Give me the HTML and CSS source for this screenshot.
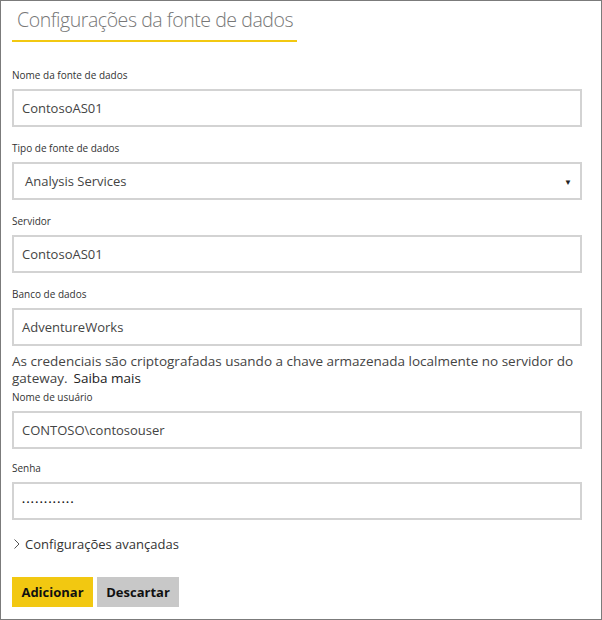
FILE: index.html
```html
<!DOCTYPE html>
<html lang="pt">
<head>
<meta charset="utf-8">
<link rel="stylesheet" href="styles.css">
</head>
<body>
<div class="panel">
  <div class="title-wrap"><h1 class="title">Configurações da fonte de dados</h1></div>
  <div class="form">
    <div class="group">
      <div class="label">Nome da fonte de dados</div>
      <div class="field">ContosoAS01</div>
    </div>
    <div class="group">
      <div class="label">Tipo de fonte de dados</div>
      <div class="field select"><span class="select-value">Analysis Services</span><span class="arrow">▼</span></div>
    </div>
    <div class="group">
      <div class="label">Servidor</div>
      <div class="field">ContosoAS01</div>
    </div>
    <div class="group">
      <div class="label">Banco de dados</div>
      <div class="field">AdventureWorks</div>
    </div>
    <div class="note">
      <span class="note-line">As credenciais são criptografadas usando a chave armazenada localmente no servidor do</span>
      <span class="note-line"><span>gateway.</span><a class="link">Saiba mais</a></span>
    </div>
    <div class="group tight">
      <div class="label">Nome de usuário</div>
      <div class="field">CONTOSO\contosouser</div>
    </div>
    <div class="group">
      <div class="label">Senha</div>
      <div class="field password">••••••••••••</div>
    </div>
    <div class="advanced"><span class="chev"><svg width="6" height="10" viewBox="0 0 6 10"><path d="M0.5 0.5 L5 5 L0.5 9.5" fill="none" stroke="#555" stroke-width="1"/></svg></span>Configurações avançadas</div>
    <div class="buttons">
      <button class="btn btn-primary">Adicionar</button>
      <button class="btn btn-secondary">Descartar</button>
    </div>
  </div>
</div>
</body>
</html>
```

FILE: styles.css
```css
html, body {
  margin: 0;
  padding: 0;
}
body {
  width: 602px;
  height: 620px;
  font-family: "Open Sans", "Noto Sans", sans-serif;
  color: #333;
}
.panel {
  box-sizing: border-box;
  width: 602px;
  height: 620px;
  border: 1px solid #7b7b7b;
  padding: 0 19px 0 11px;
}
.title-wrap {
  display: inline-block;
  padding: 5px 0 6px 5px;
  width: 280px;
  border-bottom: 2px solid #f2c811;
}
.title {
  margin: 0;
  font-size: 19.5px;
  line-height: 28px;
  font-weight: 300;
  color: #777;
  letter-spacing: -0.45px;
  white-space: nowrap;
}
.form {
  display: flex;
  flex-direction: column;
  padding-top: 26px;
}
.group {
  display: flex;
  flex-direction: column;
  gap: 7px;
  margin-bottom: 14px;
}
.label {
  font-size: 10px;
  line-height: 14px;
  color: #333;
}
.field {
  box-sizing: border-box;
  height: 38px;
  border: 2px solid #d3d3d3;
  padding: 0 8px;
  display: flex;
  align-items: center;
  font-size: 13px;
  color: #444;
}
.select {
  justify-content: space-between;
  padding-left: 11px;
  padding-right: 8px;
}
.arrow {
  font-size: 8px;
  color: #222;
}
.password {
  font-size: 8px;
  letter-spacing: 1.4px;
  color: #222;
}
.note {
  display: flex;
  flex-direction: column;
  margin: -7px 0 3px 0;
  font-size: 13.5px;
  line-height: 17px;
  color: #444;
  white-space: nowrap;
}
.note-line {
  display: flex;
  gap: 6px;
}
.link {
  color: #222;
}
.group.tight {
  margin-bottom: 12px;
}
.advanced {
  display: flex;
  align-items: center;
  gap: 5px;
  padding-left: 2px;
  font-size: 13px;
  line-height: 20px;
  color: #333;
}
.chev {
  display: flex;
}
.buttons {
  display: flex;
  gap: 4px;
  margin-top: 23px;
}
.btn {
  height: 30px;
  border: 0;
  font-family: inherit;
  font-weight: 700;
  font-size: 13px;
  color: #111;
  padding: 0;
}
.btn-primary {
  width: 81px;
  background: #f2c811;
}
.btn-secondary {
  width: 82px;
  background: #c8c8c8;
}
```
